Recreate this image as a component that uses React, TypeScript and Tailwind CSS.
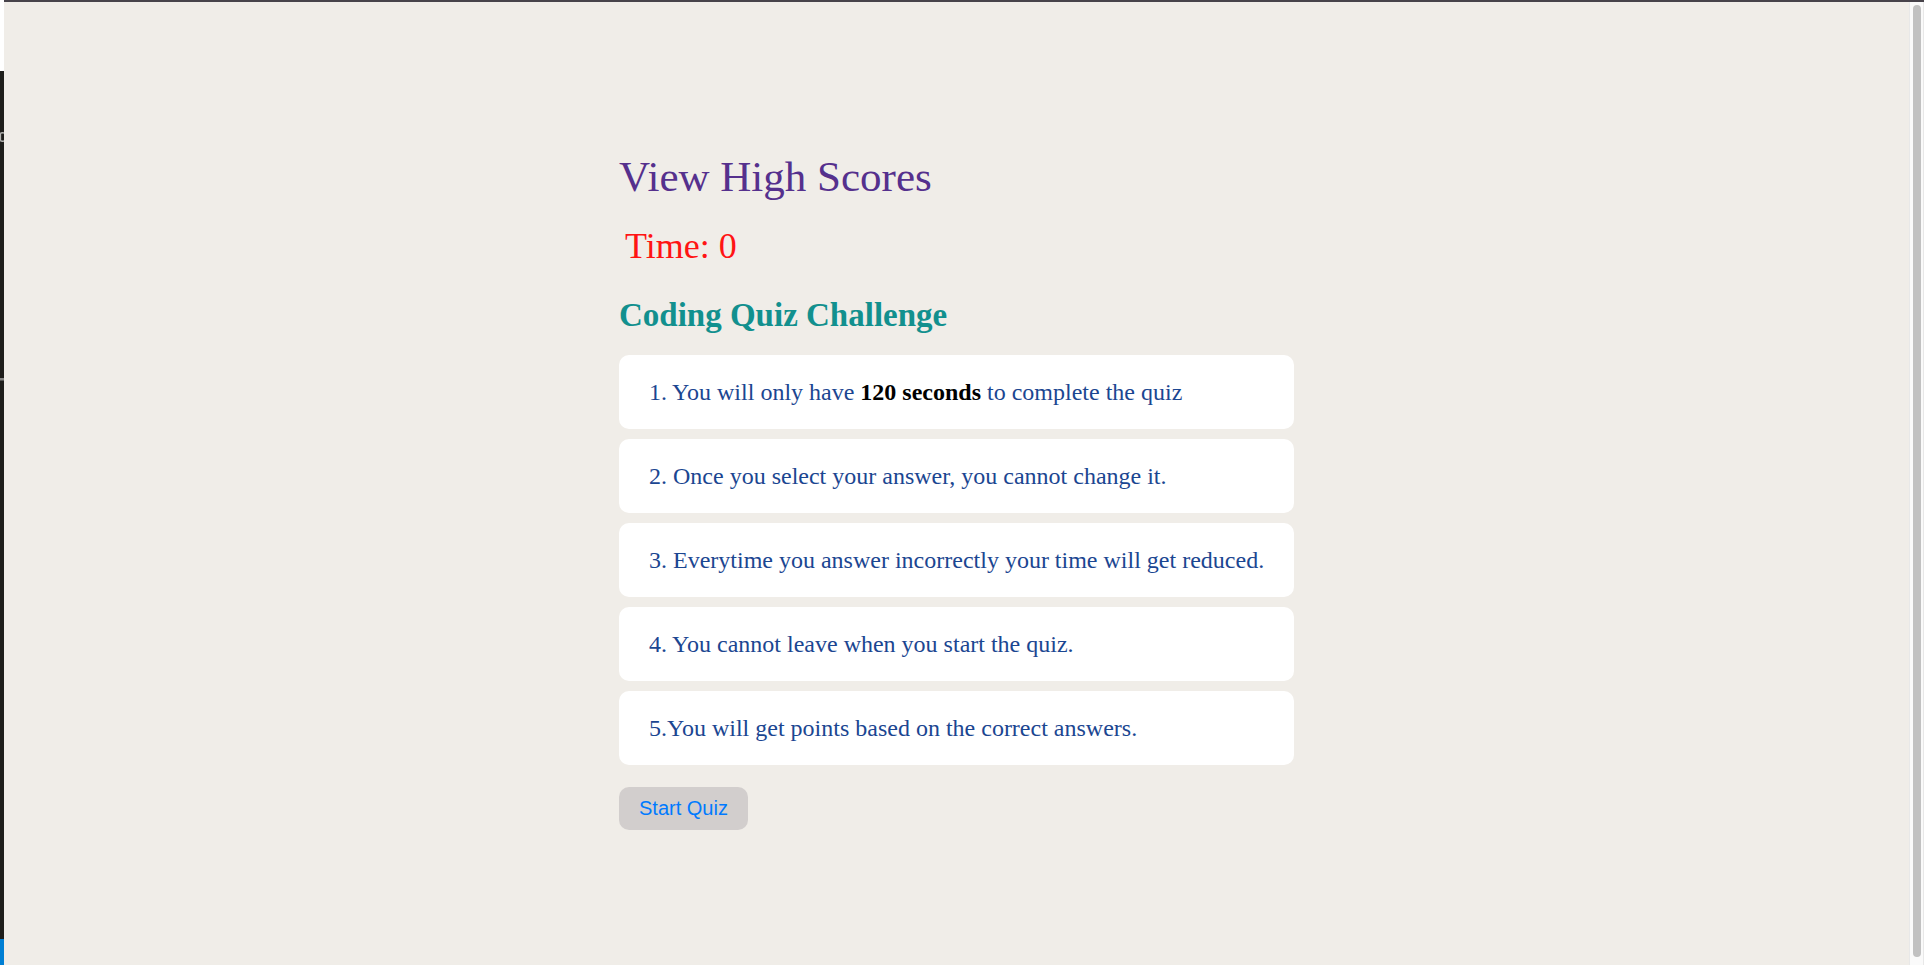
import type { ReactNode } from "react";

const rules: ReactNode[] = [
  <>
    1. You will only have <strong className="font-bold text-black">120 seconds</strong> to complete the quiz
  </>,
  "2. Once you select your answer, you cannot change it.",
  "3. Everytime you answer incorrectly your time will get reduced.",
  "4. You cannot leave when you start the quiz.",
  "5.You will get points based on the correct answers.",
];

function WindowEdge() {
  return (
    <div aria-hidden="true" className="flex w-1 shrink-0 flex-col overflow-hidden bg-[#1e1e1b]">
      <div className="h-[71px] bg-white" />
      <svg className="mt-[60px] h-3 w-1 shrink-0" viewBox="0 0 4 12">
        <path d="M4 2.2Q2 1 0 2.6M0 9.4Q2 11 4 9.8M0.4 3V9" fill="none" stroke="#b4b4b2" strokeWidth="1.5" />
      </svg>
      <div className="mt-[235px] h-0.5 bg-[#868684]" />
      <div className="h-px bg-[#555553]" />
      <div className="grow" />
      <div className="h-[26px] bg-[#007fd4]" />
    </div>
  );
}

function ScrollTrack() {
  return (
    <div aria-hidden="true" className="flex w-[15px] shrink-0 border-x border-[#e8e8e8] bg-[#fafafa] pt-[3px] pb-2 pl-[3px]">
      <div className="w-2 rounded-full bg-[#c1c1c1]" />
    </div>
  );
}

export default function App() {
  return (
    <div className="flex min-h-screen bg-[#f0ede8]">
      <WindowEdge />
      <div className="flex grow flex-col">
        <div className="h-0.5 bg-[#47434a]" />
        <div className="flex grow">
          <main className="flex grow flex-col items-center justify-center font-['Liberation_Serif',serif]">
            <div className="w-full max-w-[675px]">
              <a href="#scores" className="block text-[43px] leading-[80px] text-[#55308d]">
                View High Scores
              </a>
              <p className="px-1.5 text-[36px] leading-[58px] text-[#ff1414]">Time: 0</p>
              <h1 className="text-[33px] leading-[80px] font-bold text-[#12908e]">Coding Quiz Challenge</h1>
              <ul className="flex flex-col gap-2.5">
                {rules.map((rule, index) => (
                  <li key={index} className="rounded-[10px] bg-white py-5 pr-5 pl-[30px] text-[24px] leading-[34px] text-[#1b4691]">
                    {rule}
                  </li>
                ))}
              </ul>
              <button type="button" className="mt-[22px] rounded-[10px] bg-[#d2cecd] px-5 py-2 font-['Liberation_Sans',sans-serif] text-[20px] leading-[27px] text-[#007aff]">
                Start Quiz
              </button>
            </div>
          </main>
          <ScrollTrack />
        </div>
      </div>
    </div>
  );
}
